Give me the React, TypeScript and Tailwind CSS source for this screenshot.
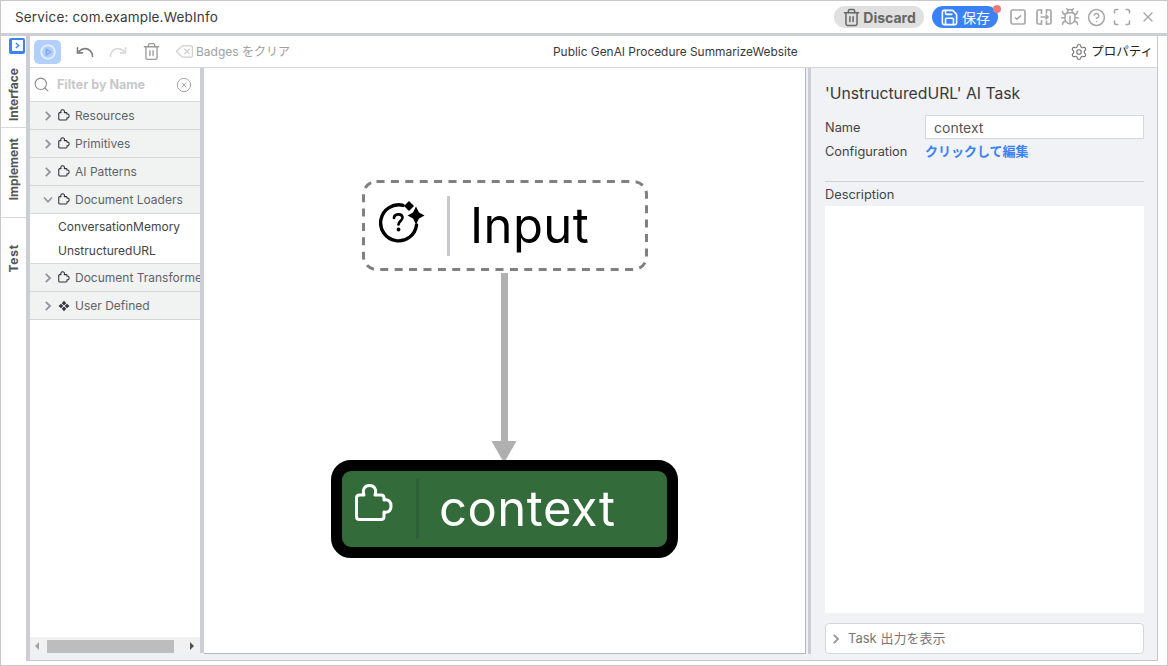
import React from "react";
import { Trash2, Save, Bug, CircleHelp, Scan, X, Settings, Search, CircleX, Delete, Undo, Redo } from "lucide-react";

const PUZZLE_PATH =
  "M5.500 12 H10 C8 6 11 2.500 15.500 2.500 C20 2.500 23 6 21 12 H27 Q30 12 30 15 V17 C35 16 37 19 37 23 C37 27 35 30 30 29 V33.500 Q30 36.500 27 36.500 H5.500 Q2.500 36.500 2.500 33.500 V15 Q2.500 12 5.500 12 Z";

function Chevron({ down = false, className }: { down?: boolean; className?: string }) {
  return down ? (
    <svg viewBox="0 0 10 8" fill="none" stroke="currentColor" strokeWidth="1.700" className={`w-[10px] h-[8px] ${className ?? ""}`}>
      <path d="M1 1.500 L5 5.800 L9 1.500" />
    </svg>
  ) : (
    <svg viewBox="0 0 8 10" fill="none" stroke="currentColor" strokeWidth="1.800" className={`w-[8px] h-[10px] ${className ?? ""}`}>
      <path d="M1.800 .8 L6 5 L1.800 9.200" />
    </svg>
  );
}

function Group({ label, icon = "puzzle", open = false }: { label: string; icon?: string; open?: boolean }) {
  return (
    <div className="h-[28px] shrink-0 flex items-center bg-[#f1f3f2] border-b border-[#d4d6da] text-[12px] text-[#5f6368] whitespace-nowrap overflow-hidden">
      {open ? (
        <Chevron down className="ml-[13px] mr-[5px] text-[#8f98a0] shrink-0" />
      ) : (
        <Chevron className="ml-[14px] mr-[6px] text-[#8f98a0] shrink-0" />
      )}
      {icon === "puzzle" ? (
        <svg viewBox="0 0 40 40" fill="none" stroke="#2f3236" strokeWidth="3.600" strokeLinejoin="round" className="w-[12px] h-[12px] shrink-0 -mt-[1px]">
          <path d={PUZZLE_PATH} />
        </svg>
      ) : (
        <svg viewBox="0 0 12 12" fill="#33363a" className="w-[12px] h-[12px] shrink-0">
          <path d="M6 .8 L8.200 3.200 L6 5.400 L3.800 3.200 Z M3 3.800 L5.200 6 L3 8.200 L.6 6 Z M9 3.800 L11.400 6 L9 8.200 L6.800 6 Z M6 6.600 L8.200 8.800 L6 11.200 L3.800 8.800 Z" />
        </svg>
      )}
      <span className="ml-[5px]">{label}</span>
    </div>
  );
}

function Slot({ children }: { children: React.ReactNode }) {
  return <div className="w-[26px] flex items-center justify-center">{children}</div>;
}

export default function App() {
  return (
    <div className="w-[1168px] h-[666px] bg-white border border-[#c8c8c8] flex flex-col overflow-hidden font-['Inter','Noto_Sans_CJK_JP',sans-serif] text-[#333]">
      {/* Title bar */}
      <div className="h-[32px] shrink-0 flex items-center pl-[14px] pr-[6px] border-b-[3px] border-[#ccced3] box-content">
        <span className="text-[13.500px] text-[#3a3a3a] tracking-[0.17px]">Service: com.example.WebInfo</span>
        <div className="ml-auto flex items-center">
          <button className="w-[90px] h-[22px] rounded-full bg-[#e0e0e0] flex items-center justify-center gap-[2px] text-[14px] font-bold text-[#666]">
            <Trash2 size={19} strokeWidth={1.900} />
            Discard
          </button>
          <div className="relative ml-[8px]">
            <button className="w-[66px] h-[22px] rounded-full bg-[#3b82f6] flex items-center justify-center gap-[3px] text-[14px] text-white">
              <Save size={19} strokeWidth={2} />
              保存
            </button>
            <span className="absolute -top-[1px] -right-[3px] w-[8px] h-[8px] rounded-full bg-[#f07878]" />
          </div>
          <div className="ml-[7px] flex items-center text-[#a8a8a8]">
            <Slot>
              <svg viewBox="0 0 16 16" fill="none" stroke="currentColor" strokeWidth="1.700" className="w-[16px] h-[16px]">
                <rect x="1" y="1" width="14" height="14" rx="1.500" />
                <path d="M5 8.500 L7 10 L11 6.500" stroke="#999" strokeWidth="1.400" />
              </svg>
            </Slot>
            <Slot>
              <svg viewBox="0 0 16 16" fill="none" stroke="currentColor" strokeWidth="1.700" className="w-[16px] h-[16px]">
                <path d="M5.500 1H2.500A1.500 1.500 0 0 0 1 2.500v11A1.500 1.500 0 0 0 2.500 15h3M5.500 0v5M5.500 11v5M10.500 1h3A1.500 1.500 0 0 1 15 2.500v11a1.500 1.500 0 0 1-1.500 1.500h-3M10.500 0v4.500M10.500 11.500V16M4.500 8h7.500M9.500 5.500L12 8L9.500 10.500" />
              </svg>
            </Slot>
            <Slot>
              <Bug size={20} strokeWidth={1.800} />
            </Slot>
            <Slot>
              <CircleHelp size={19} strokeWidth={1.900} />
            </Slot>
            <Slot>
              <Scan size={20} strokeWidth={2} />
            </Slot>
            <Slot>
              <X size={16} strokeWidth={2} />
            </Slot>
          </div>
        </div>
      </div>

      {/* Body */}
      <div className="flex-1 min-h-0 flex pb-[4px] pr-[9px]">
        {/* Rail */}
        <div className="w-[25px] shrink-0 flex flex-col text-[#555]">
          <div className="h-[20px] shrink-0 flex justify-end pt-[2px] pr-[1px]">
            <div className="w-[16px] h-[16px] bg-[#3b82f6] rounded-[2px] flex items-start justify-end pt-[2px] pr-[2px]">
              <div className="w-[11px] h-[11px] bg-white flex items-center justify-center">
                <svg viewBox="0 0 6 8" fill="none" stroke="#3b82f6" strokeWidth="1.600" className="w-[5px] h-[7px]">
                  <path d="M1 1 L4.500 4 L1 7" />
                </svg>
              </div>
            </div>
          </div>
          <div className="h-[72px] shrink-0 border-b border-[#d8d8d8] flex items-center justify-center pt-[6px]">
            <span className="[writing-mode:vertical-rl] rotate-180 text-[12px] font-bold">Interface</span>
          </div>
          <div className="h-[90px] shrink-0 border-b border-[#d8d8d8] flex items-center justify-center pb-[6px]">
            <span className="[writing-mode:vertical-rl] rotate-180 text-[12px] font-bold">Implement</span>
          </div>
          <div className="flex-1 flex justify-center pt-[26px]">
            <span className="[writing-mode:vertical-rl] rotate-180 text-[12px] font-bold tracking-[0.8px] h-fit">Test</span>
          </div>
        </div>

        {/* Main */}
        <div className="flex-1 min-w-0 flex flex-col border-l-[4px] border-l-[#ccced6] border-r border-r-[#c8c8c8] border-b border-b-[#c8c8c8] bg-[#eef0f4]">
          {/* Toolbar */}
          <div className="h-[32px] shrink-0 relative flex items-center bg-white border-b border-[#d4d6da] pl-[4px] pr-[6px]">
            <div className="w-[27px] h-[24px] rounded-[5px] bg-[#b3cffb] flex items-center justify-center">
              <svg viewBox="0 0 16 16" fill="none" className="w-[16px] h-[16px]">
                <circle cx="8" cy="8" r="6.800" stroke="#e6effe" strokeWidth="1.800" />
                <path d="M6.300 5 L11 8 L6.300 11 Z" stroke="#78a9f6" strokeWidth="1.400" strokeLinejoin="round" />
              </svg>
            </div>
            <Undo size={20} strokeWidth={2} className="ml-[14px] text-[#808080]" />
            <Redo size={20} strokeWidth={2} className="ml-[13px] text-[#dadada]" />
            <Trash2 size={19} strokeWidth={1.700} className="ml-[14px] text-[#9a9a9a]" />
            <Delete size={19} strokeWidth={1.600} className="ml-[14px] text-[#cfcfcf]" />
            <span className="ml-[2px] text-[12px] text-[#a0a0a0]">Badges をクリア</span>
            <span className="absolute left-[523px] text-[11.900px] text-[#3a3a3a]">Public GenAI Procedure SummarizeWebsite</span>
            <div className="ml-auto -mr-[2px] flex items-center gap-[3px] text-[12.500px] text-[#222]">
              <Settings size={18} strokeWidth={1.500} className="text-[#777]" />
              <span className="pt-[1px]">プロパティ</span>
            </div>
          </div>

          {/* Content */}
          <div className="flex-1 min-h-0 flex">
            {/* Palette */}
            <div className="w-[170px] shrink-0 mb-[7px] bg-white flex flex-col">
              <div className="h-[34px] shrink-0 flex items-center border-b border-[#d4d6da] pl-[3px] pr-[8px]">
                <Search size={17} strokeWidth={1.500} className="text-[#888]" />
                <span className="ml-[7px] pt-[1px] text-[12.500px] font-bold text-[#c8c8c8]">Filter by Name</span>
                <CircleX size={16} strokeWidth={1.300} className="ml-auto text-[#999]" />
              </div>
              <Group label="Resources" />
              <Group label="Primitives" />
              <Group label="AI Patterns" />
              <Group label="Document Loaders" open />
              <div className="h-[50px] shrink-0 border-b border-[#d4d6da] pl-[28px] text-[12px] text-[#444] flex flex-col">
                <div className="h-[26px] flex items-center">ConversationMemory</div>
                <div className="h-[22px] flex items-center">UnstructuredURL</div>
              </div>
              <Group label="Document Transformers" />
              <Group label="User Defined" icon="diamonds" />
              <div className="flex-1" />
              <div className="h-[16px] shrink-0 bg-[#f1f1f1] flex items-center pt-[2px]">
                <span className="w-0 h-0 ml-[5px] border-y-[4px] border-y-transparent border-r-[4px] border-r-[#a3a3a3]" />
                <div className="ml-[8px] w-[127px] h-[13px] bg-[#bdbdbd]" />
                <span className="w-0 h-0 ml-[16px] border-y-[4px] border-y-transparent border-l-[4px] border-l-[#505050]" />
              </div>
            </div>
            <div className="w-[4px] shrink-0 bg-[#ccced6] mb-[7px]" />

            {/* Canvas */}
            <div className="relative w-[602px] shrink-0 mb-[6px] bg-white border-r border-b border-[#b4b6ba] font-['Inter',sans-serif]">
              {/* Input node */}
              <div className="absolute left-[158px] top-[112px] w-[286px] h-[91px]">
                <svg viewBox="0 0 286 91" fill="none" className="absolute inset-0 w-[286px] h-[91px]">
                  <rect x="1.500" y="1.500" width="283" height="88" rx="13" stroke="#808080" strokeWidth="3" strokeDasharray="8 6.400" />
                </svg>
                <svg viewBox="0 0 46 46" fill="none" className="absolute left-[17px] top-[20px] w-[46px] h-[46px]">
                  <path d="M24 5.400 A18 18 0 1 0 37.500 25" stroke="#000" strokeWidth="3.400" strokeLinecap="round" />
                  <path d="M15 18 C15 13.500 23 12.800 23.500 17.500 C23.800 20.500 19.800 21 19.500 24.500" stroke="#000" strokeWidth="2.700" strokeLinecap="round" />
                  <circle cx="19.500" cy="29.500" r="1.900" fill="#000" />
                  <path d="M30 1 L35 6 L30 11 L25 6 Z" fill="#000" />
                  <path d="M37 6.500 L40 12.500 L45.500 15.500 L40 18.500 L37 24.500 L34 18.500 L28.500 15.500 L34 12.500 Z" fill="#000" />
                </svg>
                <div className="absolute left-[85px] top-[16px] w-[3px] h-[60px] bg-[#c8c8ce]" />
                <span className="absolute left-[108px] top-[17px] text-[49px] leading-[58px] tracking-[0.4px] text-black">Input</span>
              </div>
              {/* Connector */}
              <svg viewBox="0 0 26 190" className="absolute left-[287px] top-[205px] w-[26px] h-[190px]">
                <rect x="10" y="0" width="7" height="172" fill="#b0b0b0" />
                <path d="M.5 168 H25.500 L13 190 Z" fill="#b0b0b0" />
              </svg>
              {/* Context node */}
              <div className="absolute left-[127px] top-[392px] w-[347px] h-[98px] rounded-[20px] border-[11px] border-black bg-[#336b3a] text-white">
                <svg viewBox="0 0 40 40" fill="none" stroke="#fff" strokeWidth="3" strokeLinejoin="round" className="absolute left-[12px] top-[12px] w-[40px] h-[40px]">
                  <path d={PUZZLE_PATH} />
                </svg>
                <div className="absolute left-[74px] top-[8px] w-[3px] h-[60px] bg-[#2f5f38]" />
                <span className="absolute left-[97px] top-[9px] text-[49px] leading-[58px] tracking-[0.5px]">context</span>
              </div>
            </div>
            <div className="w-[2px] shrink-0" />
            <div className="w-[3px] shrink-0 bg-[#ccced6] mb-[6px]" />

            {/* Properties */}
            <div className="flex-1 min-w-0 bg-[#f0f2f6] pl-[14px] pr-[13px] flex flex-col pb-[6px]">
              <div className="h-[50px] shrink-0 flex items-center text-[15.750px] text-[#3a3a3a] pt-[1px]">'UnstructuredURL' AI Task</div>
              <div className="h-[24px] shrink-0 -mt-[3px] flex items-center text-[12.800px] text-[#444]">
                <span className="w-[100px] pt-[1px]">Name</span>
                <div className="flex-1 h-[24px] bg-white border border-[#d4d8dc] pl-[8px] flex items-center text-[14px] text-[#555]">context</div>
              </div>
              <div className="h-[24px] shrink-0 flex items-center text-[12.800px] text-[#444] pt-[1px]">
                <span className="w-[100px]">Configuration</span>
                <span className="text-[#3b82f6] text-[13px] font-semibold">クリックして編集</span>
              </div>
              <div className="mt-[18px] shrink-0 border-t border-[#d0d2d6]" />
              <div className="h-[24px] shrink-0 flex items-center text-[12.800px] text-[#444] pt-[1px]">Description</div>
              <div className="flex-1 min-h-0 bg-white" />
              <div className="mt-[10px] h-[31px] shrink-0 bg-white border border-[#d4d6da] rounded-[4px] flex items-center pl-[6px] text-[13px] text-[#777]">
                <Chevron className="text-[#8f98a0]" />
                <span className="ml-[8px]">Task 出力を表示</span>
              </div>
            </div>
          </div>
        </div>
      </div>
    </div>
  );
}
